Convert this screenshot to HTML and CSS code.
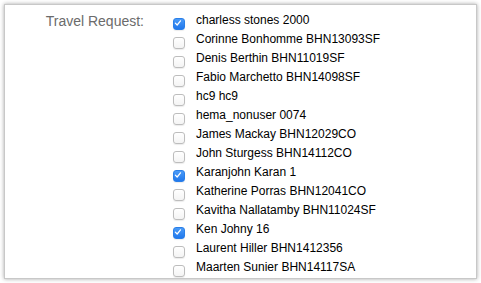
FILE: index.html
```html
<!DOCTYPE html>
<html lang="en">
<head>
  <meta charset="UTF-8" />
  <title>Travel Request</title>
  <link rel="stylesheet" href="styles.css">
</head>
<body>

  <div class="card">
    <div class="field">
      <div class="field-label">Travel Request:</div>
      <ul class="checklist">
        <li><span class="box checked"><svg viewBox="0 0 12 12"><path d="M2.8 6.2 L5 8.4 L9 3.4" /></svg></span>charless stones 2000</li>
        <li><span class="box"></span>Corinne Bonhomme BHN13093SF</li>
        <li><span class="box"></span>Denis Berthin BHN11019SF</li>
        <li><span class="box"></span>Fabio Marchetto BHN14098SF</li>
        <li><span class="box"></span>hc9 hc9</li>
        <li><span class="box"></span>hema_nonuser 0074</li>
        <li><span class="box"></span>James Mackay BHN12029CO</li>
        <li><span class="box"></span>John Sturgess BHN14112CO</li>
        <li><span class="box checked"><svg viewBox="0 0 12 12"><path d="M2.8 6.2 L5 8.4 L9 3.4" /></svg></span>Karanjohn Karan 1</li>
        <li><span class="box"></span>Katherine Porras BHN12041CO</li>
        <li><span class="box"></span>Kavitha Nallatamby BHN11024SF</li>
        <li><span class="box checked"><svg viewBox="0 0 12 12"><path d="M2.8 6.2 L5 8.4 L9 3.4" /></svg></span>Ken Johny 16</li>
        <li><span class="box"></span>Laurent Hiller BHN1412356</li>
        <li><span class="box"></span>Maarten Sunier BHN14117SA</li>
      </ul>
    </div>
  </div>

</body>
</html>
```

FILE: styles.css
```css
body {
  margin: 0;
  padding: 4px;
  background: #ffffff;
  font-family: 'Liberation Sans', Arial, sans-serif;
}

.card {
  height: 275px;
  box-sizing: border-box;
  border: 1px solid #c8c8c8;
  background: white;
  box-shadow: 0 0 4px rgba(0,0,0,0.35);
  overflow: hidden;
}

.field {
  display: flex;
  padding-top: 7px;
}

.field-label {
  width: 139px;
  text-align: right;
  font-size: 14px;
  color: #6b6b6b;
  line-height: 18px;
}

.checklist {
  list-style: none;
  margin: 0 0 0 29px;
  padding: 0;
}

.checklist li {
  display: flex;
  align-items: flex-start;
  height: 19px;
  font-size: 12px;
  line-height: 16px;
  color: #000;
}

.box {
  width: 10px;
  height: 10px;
  margin-top: 6px;
  margin-right: 11px;
  flex: none;
  border: 1px solid #bdbdbd;
  border-radius: 3px;
  background: linear-gradient(#ffffff, #f4f4f4);
  box-shadow: 0 1px 1px rgba(0,0,0,0.08);
}

.box.checked {
  border-color: #2a7fe8;
  background: linear-gradient(#4a9bf8, #2178ec);
}

.box svg {
  display: block;
  width: 10px;
  height: 10px;
  margin: -1px 0 0 -1px;
  overflow: visible;
}

.box svg path {
  fill: none;
  stroke: white;
  stroke-width: 1.5;
  stroke-linecap: round;
  stroke-linejoin: round;
}
```
